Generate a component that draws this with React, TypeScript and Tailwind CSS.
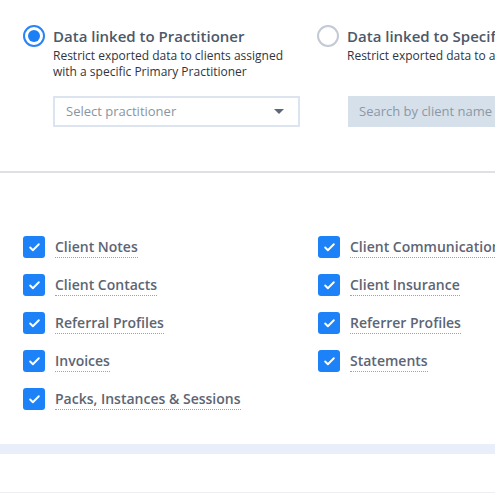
import { Check } from "lucide-react";

const leftItems = ["Client Notes", "Client Contacts", "Referral Profiles", "Invoices", "Packs, Instances & Sessions"];
const rightItems = ["Client Communications", "Client Insurance", "Referrer Profiles", "Statements"];

function Radio({ checked }: { checked: boolean }) {
  return checked ? (
    <div className="w-[22px] h-[22px] shrink-0 rounded-full border-2 border-[#2a84f6] flex items-center justify-center">
      <div className="w-[12px] h-[12px] rounded-full bg-[#1d7ff6]" />
    </div>
  ) : (
    <div className="w-[22px] h-[22px] shrink-0 rounded-full border-2 border-[#c3cad6] bg-white" />
  );
}

function CheckItem({ label }: { label: string }) {
  return (
    <div className="flex items-center gap-[10px] h-[22px]">
      <div className="w-[22px] h-[22px] shrink-0 rounded-[3px] bg-[#1d82f8] flex items-center justify-center">
        <Check className="w-[13px] h-[13px] text-white" strokeWidth={3.5} />
      </div>
      <span className="text-[14px] leading-[20px] font-semibold text-[#5c6574] whitespace-nowrap border-b border-dotted border-[#9aa3b0]">
        {label}
      </span>
    </div>
  );
}

export default function App() {
  return (
    <div className="w-[495px] h-[495px] overflow-hidden bg-white" style={{ fontFamily: '"Open Sans", sans-serif' }}>
      <div className="w-[700px]">
        {/* Filter options */}
        <div className="flex pl-[23px] pt-[25px] h-[171px]">
          <div className="w-[294px] flex flex-col">
            <div className="flex gap-[8px]">
              <Radio checked />
              <div>
                <div className="text-[15px] leading-[22px] font-semibold text-[#4d5868] whitespace-nowrap">
                  Data linked to Practitioner
                </div>
                <div className="text-[12px] leading-[16px] text-[#2f3540] mt-[1px]">
                  Restrict exported data to clients assigned
                  <br />
                  with a specific Primary Practitioner
                </div>
              </div>
            </div>
            <div className="ml-[30px] mt-[16px] w-[247px] h-[31px] border-2 border-[#dce4ef] flex items-center justify-between pl-[11px] pr-[14px]">
              <span className="text-[13px] text-[#8a94a3]">Select practitioner</span>
              <span className="w-0 h-0 border-l-[5px] border-r-[5px] border-t-[5px] border-l-transparent border-r-transparent border-t-[#5e6775]" />
            </div>
          </div>
          <div className="w-[360px] flex flex-col">
            <div className="flex gap-[8px]">
              <Radio checked={false} />
              <div>
                <div className="text-[15px] leading-[22px] font-semibold text-[#4d5868] whitespace-nowrap">
                  Data linked to Specific Clients
                </div>
                <div className="text-[12px] leading-[16px] text-[#2f3540] mt-[1px] whitespace-nowrap">
                  Restrict exported data to a selection of clients
                </div>
              </div>
            </div>
            <div className="ml-[31px] mt-[32px] w-[250px] h-[31px] bg-[#d6e0ea] flex items-center pl-[11px]">
              <span className="text-[13px] text-[#8b97a6]">Search by client name</span>
            </div>
          </div>
        </div>

        <div className="h-[2px] bg-[#dfe0e6]" />

        {/* Data types */}
        <div className="flex pl-[23px] pt-[63px] h-[271px]">
          <div className="w-[295px] flex flex-col gap-[16px]">
            {leftItems.map((l) => (
              <CheckItem key={l} label={l} />
            ))}
          </div>
          <div className="flex flex-col gap-[16px]">
            {rightItems.map((l) => (
              <CheckItem key={l} label={l} />
            ))}
          </div>
        </div>

        <div className="h-[10px] bg-[#e8eefa]" />
        <div className="h-[38px]" />
        <div className="h-[1px] bg-[#eceef2]" />
      </div>
    </div>
  );
}
